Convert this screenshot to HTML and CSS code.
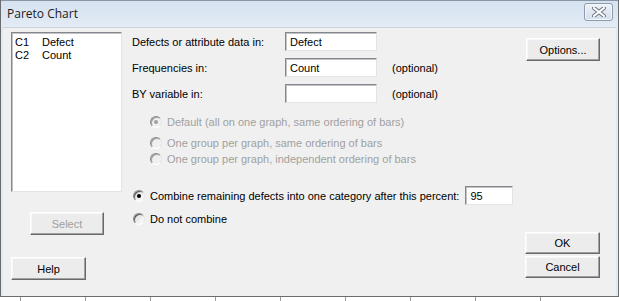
FILE: index.html
```html
<!DOCTYPE html>
<html lang="en">
<head>
  <meta charset="UTF-8" />
  <title>Pareto Chart</title>
  <link rel="stylesheet" href="styles.css">
</head>
<body>
  <div class="window">
    <div class="titlebar">
      <span class="title">Pareto Chart</span>
      <button class="close" type="button" aria-label="Close">
        <svg width="14" height="10" viewBox="0 0 14 10">
          <path d="M2 1 L12 9 M12 1 L2 9" stroke="#6b7685" stroke-width="4" stroke-linecap="square"/>
          <path d="M2 1 L12 9 M12 1 L2 9" stroke="#fff" stroke-width="2" stroke-linecap="square"/>
        </svg>
      </button>
    </div>

    <div class="dialog">
      <div class="col-left">
        <div class="listbox">
          <div class="item"><span class="cnum">C1</span>Defect</div>
          <div class="item"><span class="cnum">C2</span>Count</div>
        </div>
        <button class="btn btn-select" type="button" disabled>Select</button>
        <button class="btn btn-help" type="button">Help</button>
      </div>

      <div class="col-main">
        <div class="field">
          <label class="lbl">Defects or attribute data in:</label>
          <input class="txt" type="text" value="Defect">
        </div>
        <div class="field">
          <label class="lbl">Frequencies in:</label>
          <input class="txt" type="text" value="Count">
          <span class="opt">(optional)</span>
        </div>
        <div class="field">
          <label class="lbl">BY variable in:</label>
          <input class="txt" type="text" value="">
          <span class="opt">(optional)</span>
        </div>

        <div class="group">
          <div class="radio disabled"><span class="dot checked"></span>Default (all on one graph, same ordering of bars)</div>
          <div class="radio r-second disabled"><span class="dot"></span>One group per graph, same ordering of bars</div>
          <div class="radio disabled"><span class="dot"></span>One group per graph, independent ordering of bars</div>
        </div>

        <div class="radio r-combine">
          <span class="dot checked"></span>Combine remaining defects into one category after this percent:
          <input class="txt txt-pct" type="text" value="95">
        </div>
        <div class="radio r-none"><span class="dot"></span>Do not combine</div>
      </div>

      <div class="col-right">
        <button class="btn btn-options" type="button">Options...</button>
        <button class="btn btn-ok" type="button">OK</button>
        <button class="btn btn-cancel" type="button">Cancel</button>
      </div>
    </div>
  </div>
  <div class="sheet">
    <span></span><span></span><span></span><span></span><span></span><span></span><span></span><span></span><span></span>
  </div>
</body>
</html>
```

FILE: styles.css
```css
* {
  box-sizing: border-box;
}

body {
  margin: 0;
  width: 619px;
  height: 301px;
  overflow: hidden;
  background: #fff;
  font-family: "Liberation Sans", Arial, sans-serif;
  font-size: 11px;
  color: #000;
}

.window {
  height: 297px;
  display: flex;
  flex-direction: column;
  border-left: 1px solid #6c6c6c;
  border-right: 1px solid #6c6c6c;
  border-bottom: 1px solid #6c6c6c;
  background: #dfe8f3;
}

/* title bar */
.titlebar {
  height: 27px;
  flex: none;
  display: flex;
  align-items: center;
  justify-content: space-between;
  padding: 0 5px 2px 6px;
  background: linear-gradient(#d6e2f0, #e3ebf5);
  border-top: 1px solid #8a96a5;
}

.title {
  font-family: "Open Sans", "Noto Sans", sans-serif;
  font-size: 12px;
  color: #1c1c1c;
}

.close {
  width: 29px;
  height: 18px;
  margin-top: -3px;
  padding: 0;
  display: flex;
  align-items: center;
  justify-content: center;
  border: 1px solid #8d9aac;
  border-radius: 3px;
  background: linear-gradient(#eef2f8, #d4deeb);
  box-shadow: inset 0 0 0 1px #f4f7fb;
}

/* dialog body */
.dialog {
  flex: 1;
  display: grid;
  grid-template-columns: 111px 1fr 75px;
  column-gap: 10px;
  padding: 4px 16px 0 8px;
  margin: 0 2px;
  background: #f0f0f0;
  border-top: 1px solid #c9d3df;
}

.col-left,
.col-right,
.col-main {
  display: flex;
  flex-direction: column;
}

.listbox {
  height: 160px;
  background: #fff;
  border: 1px solid;
  border-color: #828790 #e3e3e3 #e3e3e3 #828790;
  box-shadow: inset 1px 1px 0 #c3c3c3;
  padding: 3px 0 0 3px;
}

.item {
  height: 13px;
  line-height: 13px;
}

.cnum {
  display: inline-block;
  width: 27px;
}

/* buttons */
.btn {
  height: 23px;
  padding: 0;
  font: inherit;
  color: #000;
  background: #ececec;
  border: 1px solid;
  border-color: #fff #696969 #696969 #fff;
  box-shadow: inset -1px -1px 0 #a0a0a0, inset 1px 1px 0 #f7f7f7;
}

.btn:disabled {
  color: #a0a0a0;
}

.btn-select {
  width: 74px;
  margin: 20px 0 0 19px;
}

.btn-help {
  width: 75px;
  margin-top: 22px;
}

.btn-options {
  width: 74px;
  margin: 6px 0 0 1px;
}

.btn-ok {
  height: 22px;
  margin-top: 171px;
}

.btn-cancel {
  height: 22px;
  margin-top: 2px;
}

/* fields */
.field {
  display: flex;
  align-items: center;
  height: 19px;
  margin-bottom: 7px;
}

.lbl {
  width: 153px;
}

.txt {
  width: 92px;
  height: 19px;
  padding: 1px 4px 0;
  font: inherit;
  color: #000;
  background: #fff;
  border: 1px solid;
  border-color: #828790 #e3e3e3 #e3e3e3 #828790;
  box-shadow: inset 1px 1px 0 #c3c3c3;
  outline: none;
}

.opt {
  margin-left: 15px;
}

/* radio buttons */
.group {
  margin-top: 4px;
  padding-left: 18px;
}

.radio {
  display: flex;
  align-items: center;
  height: 16px;
  white-space: nowrap;
}

.radio.disabled {
  color: #a0a0a0;
}

.r-second {
  margin-top: 5px;
}

.dot {
  position: relative;
  flex: none;
  width: 12px;
  height: 12px;
  margin-right: 5px;
  border-radius: 50%;
  background: linear-gradient(135deg, #d8d8d8, #fff);
  border: 1px solid;
  border-color: #8a8a8a #e6e6e6 #ffffff #8a8a8a;
  box-shadow: inset 1px 1px 0 #5a5a5a;
}

.disabled .dot {
  box-shadow: inset 1px 1px 0 #a0a0a0;
  background: #f0f0f0;
}

.dot.checked::after {
  content: "";
  position: absolute;
  left: 3px;
  top: 3px;
  width: 4px;
  height: 4px;
  border-radius: 50%;
  background: #000;
}

.disabled .dot.checked::after {
  background: #a0a0a0;
}

.r-combine {
  height: 19px;
  margin: 19px 0 0 1px;
}

.txt-pct {
  flex: none;
  width: 48px;
  margin-left: 6px;
}

.r-none {
  margin: 6px 0 0 1px;
}

/* spreadsheet peeking below the dialog */
.sheet {
  height: 4px;
  display: flex;
  padding-left: 20px;
}

.sheet span {
  width: 65px;
  flex: none;
  border-left: 1px solid #9a9a9a;
}
```
